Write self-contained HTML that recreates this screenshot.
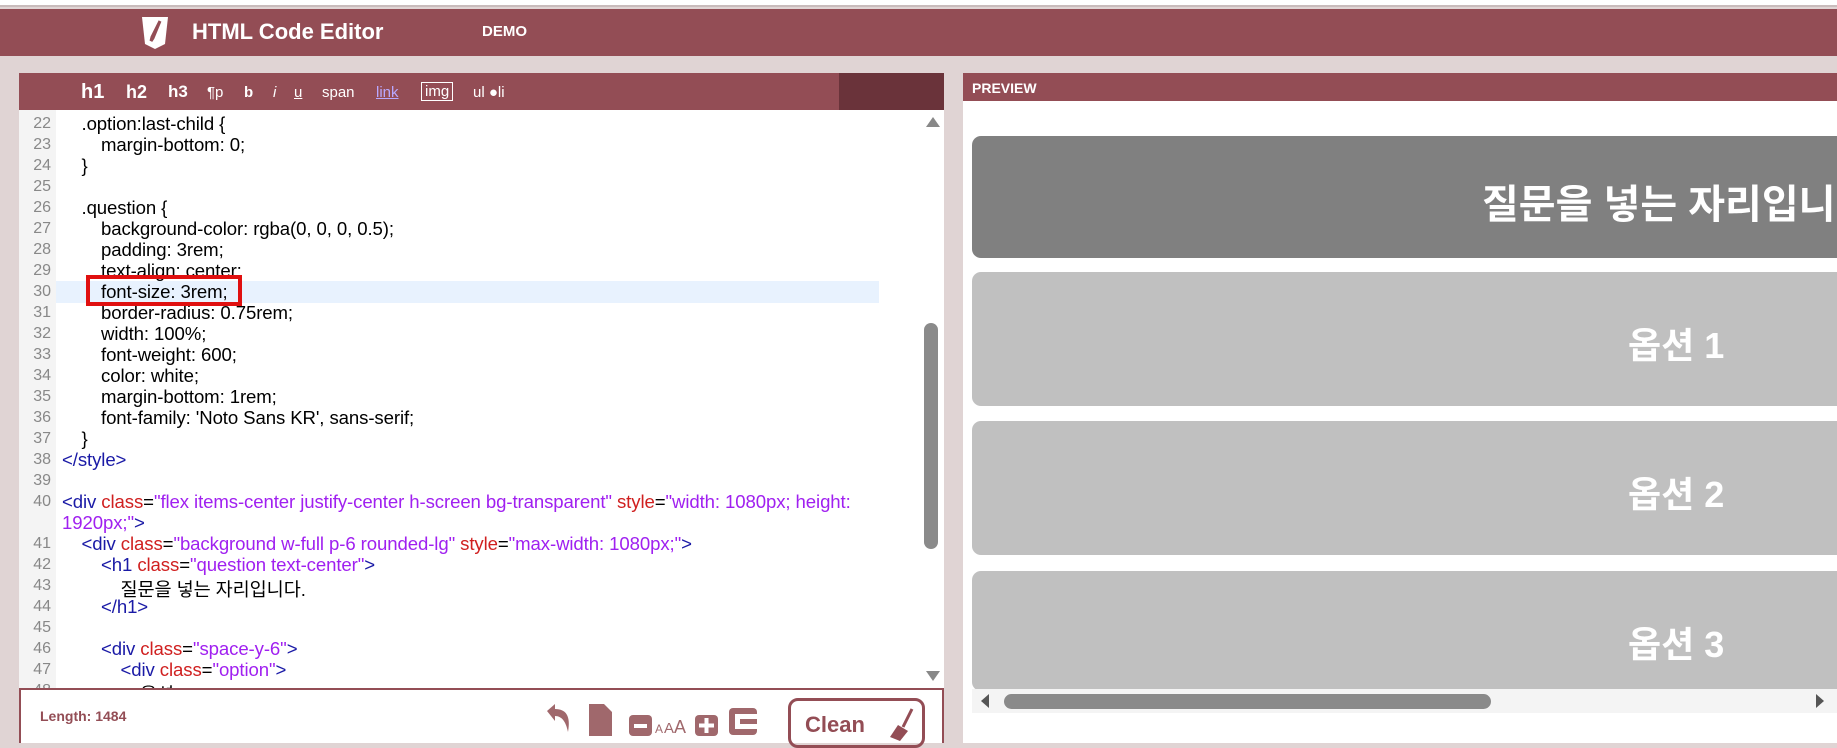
<!DOCTYPE html>
<html><head><meta charset="utf-8"><style>
*{margin:0;padding:0;box-sizing:border-box}
body{width:1837px;height:743px;overflow:hidden;background:#e0d4d4;font-family:"Liberation Sans","Noto Sans CJK KR",sans-serif;position:relative}
.a{position:absolute}
#top{left:0;top:0;width:1837px;height:7px;background:#fff;border-bottom:2px solid #c9bcbc}
#hdr{left:0;top:9px;width:1837px;height:47px;background:#934d55}
#ed{left:19px;top:73px;width:925px;height:670px;background:#fff}
#tb{left:0;top:0;width:925px;height:37px;background:#934d55;color:#fff}
#tb span{position:absolute;top:11px;font-size:16px}
#gut{left:0;top:37px;width:37px;height:578px;background:#f4f4f4}
.ln{position:absolute;left:0;width:32px;text-align:right;font-size:16px;color:#888}
.cd{position:absolute;font-size:18.6px;color:#000;white-space:pre;letter-spacing:-0.1px}
.t{color:#1a1aa6}.r{color:#d02020}.v{color:#a020f0}
#bb{left:0;top:615px;width:925px;height:55px;background:#fff;border:2px solid #934d55;border-bottom:none}
#pv{left:963px;top:73px;width:874px;height:670px;background:#fff}
.box{position:absolute;left:9px;width:880px;border-radius:9px;color:#fff;font-weight:bold}
</style></head><body>
<div class="a" id="top"></div>
<div class="a" id="hdr">
<svg class="a" style="left:140px;top:7px" width="30" height="34" viewBox="0 0 30 34"><path d="M2 1H28L25 28L15 33L5 28Z" fill="#fff"/><path d="M20 5L13 22L11 25L12 21Z" fill="#934d55" stroke="#934d55" stroke-width="3"/></svg>
<div class="a" style="left:192px;top:10px;font-size:22px;font-weight:bold;color:#fff">HTML Code Editor</div>
<div class="a" style="left:482px;top:14px;font-size:15px;font-weight:bold;color:#fff">DEMO</div>
</div>
<div class="a" id="ed">
<div class="a" id="tb">
<span style="left:62px;top:8px;font-size:20px;font-weight:bold">h1</span>
<span style="left:107px;top:9px;font-size:18px;font-weight:bold">h2</span>
<span style="left:149px;top:9px;font-size:17px;font-weight:bold">h3</span>
<span style="left:188px;font-size:15px">¶p</span>
<span style="left:225px;font-weight:bold;font-size:15px">b</span>
<span style="left:254px;font-style:italic;font-size:15px">i</span>
<span style="left:275px;text-decoration:underline;font-size:15px">u</span>
<span style="left:303px;font-size:15px">span</span>
<span style="left:357px;color:#b9a8ff;text-decoration:underline;font-size:15px">link</span>
<span style="left:402px;top:9px;border:1px solid #fff;padding:0 3px;font-size:15px">img</span>
<span style="left:454px;font-size:15px">ul ●li</span>
<div class="a" style="left:820px;top:0;width:105px;height:37px;background:#6a333a"></div>
</div>
<div class="a" id="gut"></div>
<div class="a" style="left:37px;top:208px;width:823px;height:22px;background:#e8f2fe"></div>
<div id="code"></div>
<div class="a" style="left:67px;top:202px;width:156px;height:31px;border:4px solid #e01010"></div>
<div class="a" style="left:902px;top:37px;width:23px;height:578px;background:#fff"></div>
<svg class="a" style="left:906px;top:43px" width="16" height="12"><path d="M8 1L15 11H1Z" fill="#888"/></svg>
<svg class="a" style="left:906px;top:597px" width="16" height="12"><path d="M1 1H15L8 11Z" fill="#888"/></svg>
<div class="a" style="left:905px;top:250px;width:14px;height:226px;background:#8a8a8a;border-radius:7px"></div>
<div class="a" id="bb">
<div class="a" style="left:19px;top:18px;font-size:14px;font-weight:bold;color:#934d55">Length: 1484</div>
<svg class="a" style="left:520px;top:10px" width="230" height="38">
<path d="M6 11L14 4V9C25 9 30 16 27 32C25 22 21 16 14 16V21Z" fill="#a0686c"/>
<path d="M48 4H63L71 12V36H48Z" fill="#a0686c"/>
<rect x="88" y="15" width="23" height="21" rx="4" fill="#a0686c"/><rect x="93" y="24" width="13" height="4" fill="#fff"/>
<text x="114" y="33" font-size="12" fill="#a0686c" font-family="Liberation Sans">A</text><text x="123" y="33" font-size="15" fill="#a0686c" font-family="Liberation Sans">A</text><text x="133" y="33" font-size="18" fill="#a0686c" font-family="Liberation Sans">A</text>
<rect x="154" y="15" width="23" height="21" rx="4" fill="#a0686c"/><path d="M158 25.5H173M165.5 18V33" stroke="#fff" stroke-width="4"/>
<rect x="188" y="8" width="28" height="27" rx="4" fill="#a0686c"/><rect x="194" y="14" width="22" height="15" fill="#fff"/><rect x="199" y="19" width="17" height="5" fill="#a0686c"/>
</svg>
<div class="a" style="left:767px;top:8px;width:137px;height:50px;border:3px solid #934d55;border-radius:10px;font-size:22px;font-weight:bold;color:#934d55;padding:11px 0 0 14px">Clean
<svg class="a" style="left:95px;top:6px" width="32" height="36"><path d="M26 2L17 20" stroke="#934d55" stroke-width="3"/><path d="M12 18L22 24L14 34L4 30Z" fill="#934d55"/></svg></div>
</div>
</div>
<div class="a" id="pv">
<div class="a" style="left:0;top:0;width:874px;height:28px;background:#934d55;color:#fff;font-size:14px;font-weight:bold;padding:7px 9px">PREVIEW</div>
<div class="box" style="top:63px;height:122px;background:#808080"><div class="a" style="left:510px;top:36px;font-size:40px;white-space:nowrap">질문을 넣는 자리입니다</div></div>
<div class="box" style="top:199px;height:134px;background:#c0c0c0"><div class="a" style="left:656px;top:45px;font-size:36px">옵션 1</div></div>
<div class="box" style="top:348px;height:134px;background:#c0c0c0"><div class="a" style="left:656px;top:45px;font-size:36px">옵션 2</div></div>
<div class="box" style="top:498px;height:120px;background:#c0c0c0"><div class="a" style="left:656px;top:45px;font-size:36px">옵션 3</div></div>
<div class="a" style="left:9px;top:616px;width:865px;height:24px;background:#f4f4f4"></div>
<svg class="a" style="left:16px;top:620px" width="12" height="16"><path d="M10 1V15L2 8Z" fill="#555"/></svg>
<svg class="a" style="left:851px;top:620px" width="12" height="16"><path d="M2 1V15L10 8Z" fill="#555"/></svg>
<div class="a" style="left:41px;top:621px;width:487px;height:15px;background:#8a8a8a;border-radius:8px"></div>
</div>
<script>
var rows=[
[22,1,'.option:last-child {'],[23,2,'margin-bottom: 0;'],[24,1,'}'],[25,0,''],
[26,1,'.question {'],[27,2,'background-color: rgba(0, 0, 0, 0.5);'],[28,2,'padding: 3rem;'],[29,2,'text-align: center;'],
[30,2,'font-size: 3rem;'],[31,2,'border-radius: 0.75rem;'],[32,2,'width: 100%;'],[33,2,'font-weight: 600;'],[34,2,'color: white;'],
[35,2,'margin-bottom: 1rem;'],[36,2,"font-family: 'Noto Sans KR', sans-serif;"],[37,1,'}'],[38,0,'<span class=t>&lt;/style&gt;</span>'],[39,0,''],
[40,0,'<span class=t>&lt;div </span><span class=r>class</span>=<span class=v>"flex items-center justify-center h-screen bg-transparent"</span> <span class=r>style</span>=<span class=v>"width: 1080px; height:</span>'],
['',0,'<span class=v>1920px;"</span><span class=t>&gt;</span>'],
[41,1,'<span class=t>&lt;div </span><span class=r>class</span>=<span class=v>"background w-full p-6 rounded-lg"</span> <span class=r>style</span>=<span class=v>"max-width: 1080px;"</span><span class=t>&gt;</span>'],
[42,2,'<span class=t>&lt;h1 </span><span class=r>class</span>=<span class=v>"question text-center"</span><span class=t>&gt;</span>'],
[43,3,'질문을 넣는 자리입니다.'],[44,2,'<span class=t>&lt;/h1&gt;</span>'],[45,0,''],
[46,2,'<span class=t>&lt;div </span><span class=r>class</span>=<span class=v>"space-y-6"</span><span class=t>&gt;</span>'],
[47,3,'<span class=t>&lt;div </span><span class=r>class</span>=<span class=v>"option"</span><span class=t>&gt;</span>'],
[48,4,'옵션 1']];
var h='',y=41;
rows.forEach(function(r){h+='<div class="ln" style="top:'+(y+1)+'px">'+r[0]+'</div><div class="cd" style="left:'+(43+r[1]*19.5)+'px;top:'+(y-1)+'px">'+r[2]+'</div>';y+=21.0;});
document.getElementById('code').innerHTML=h;
</script>
</body></html>
